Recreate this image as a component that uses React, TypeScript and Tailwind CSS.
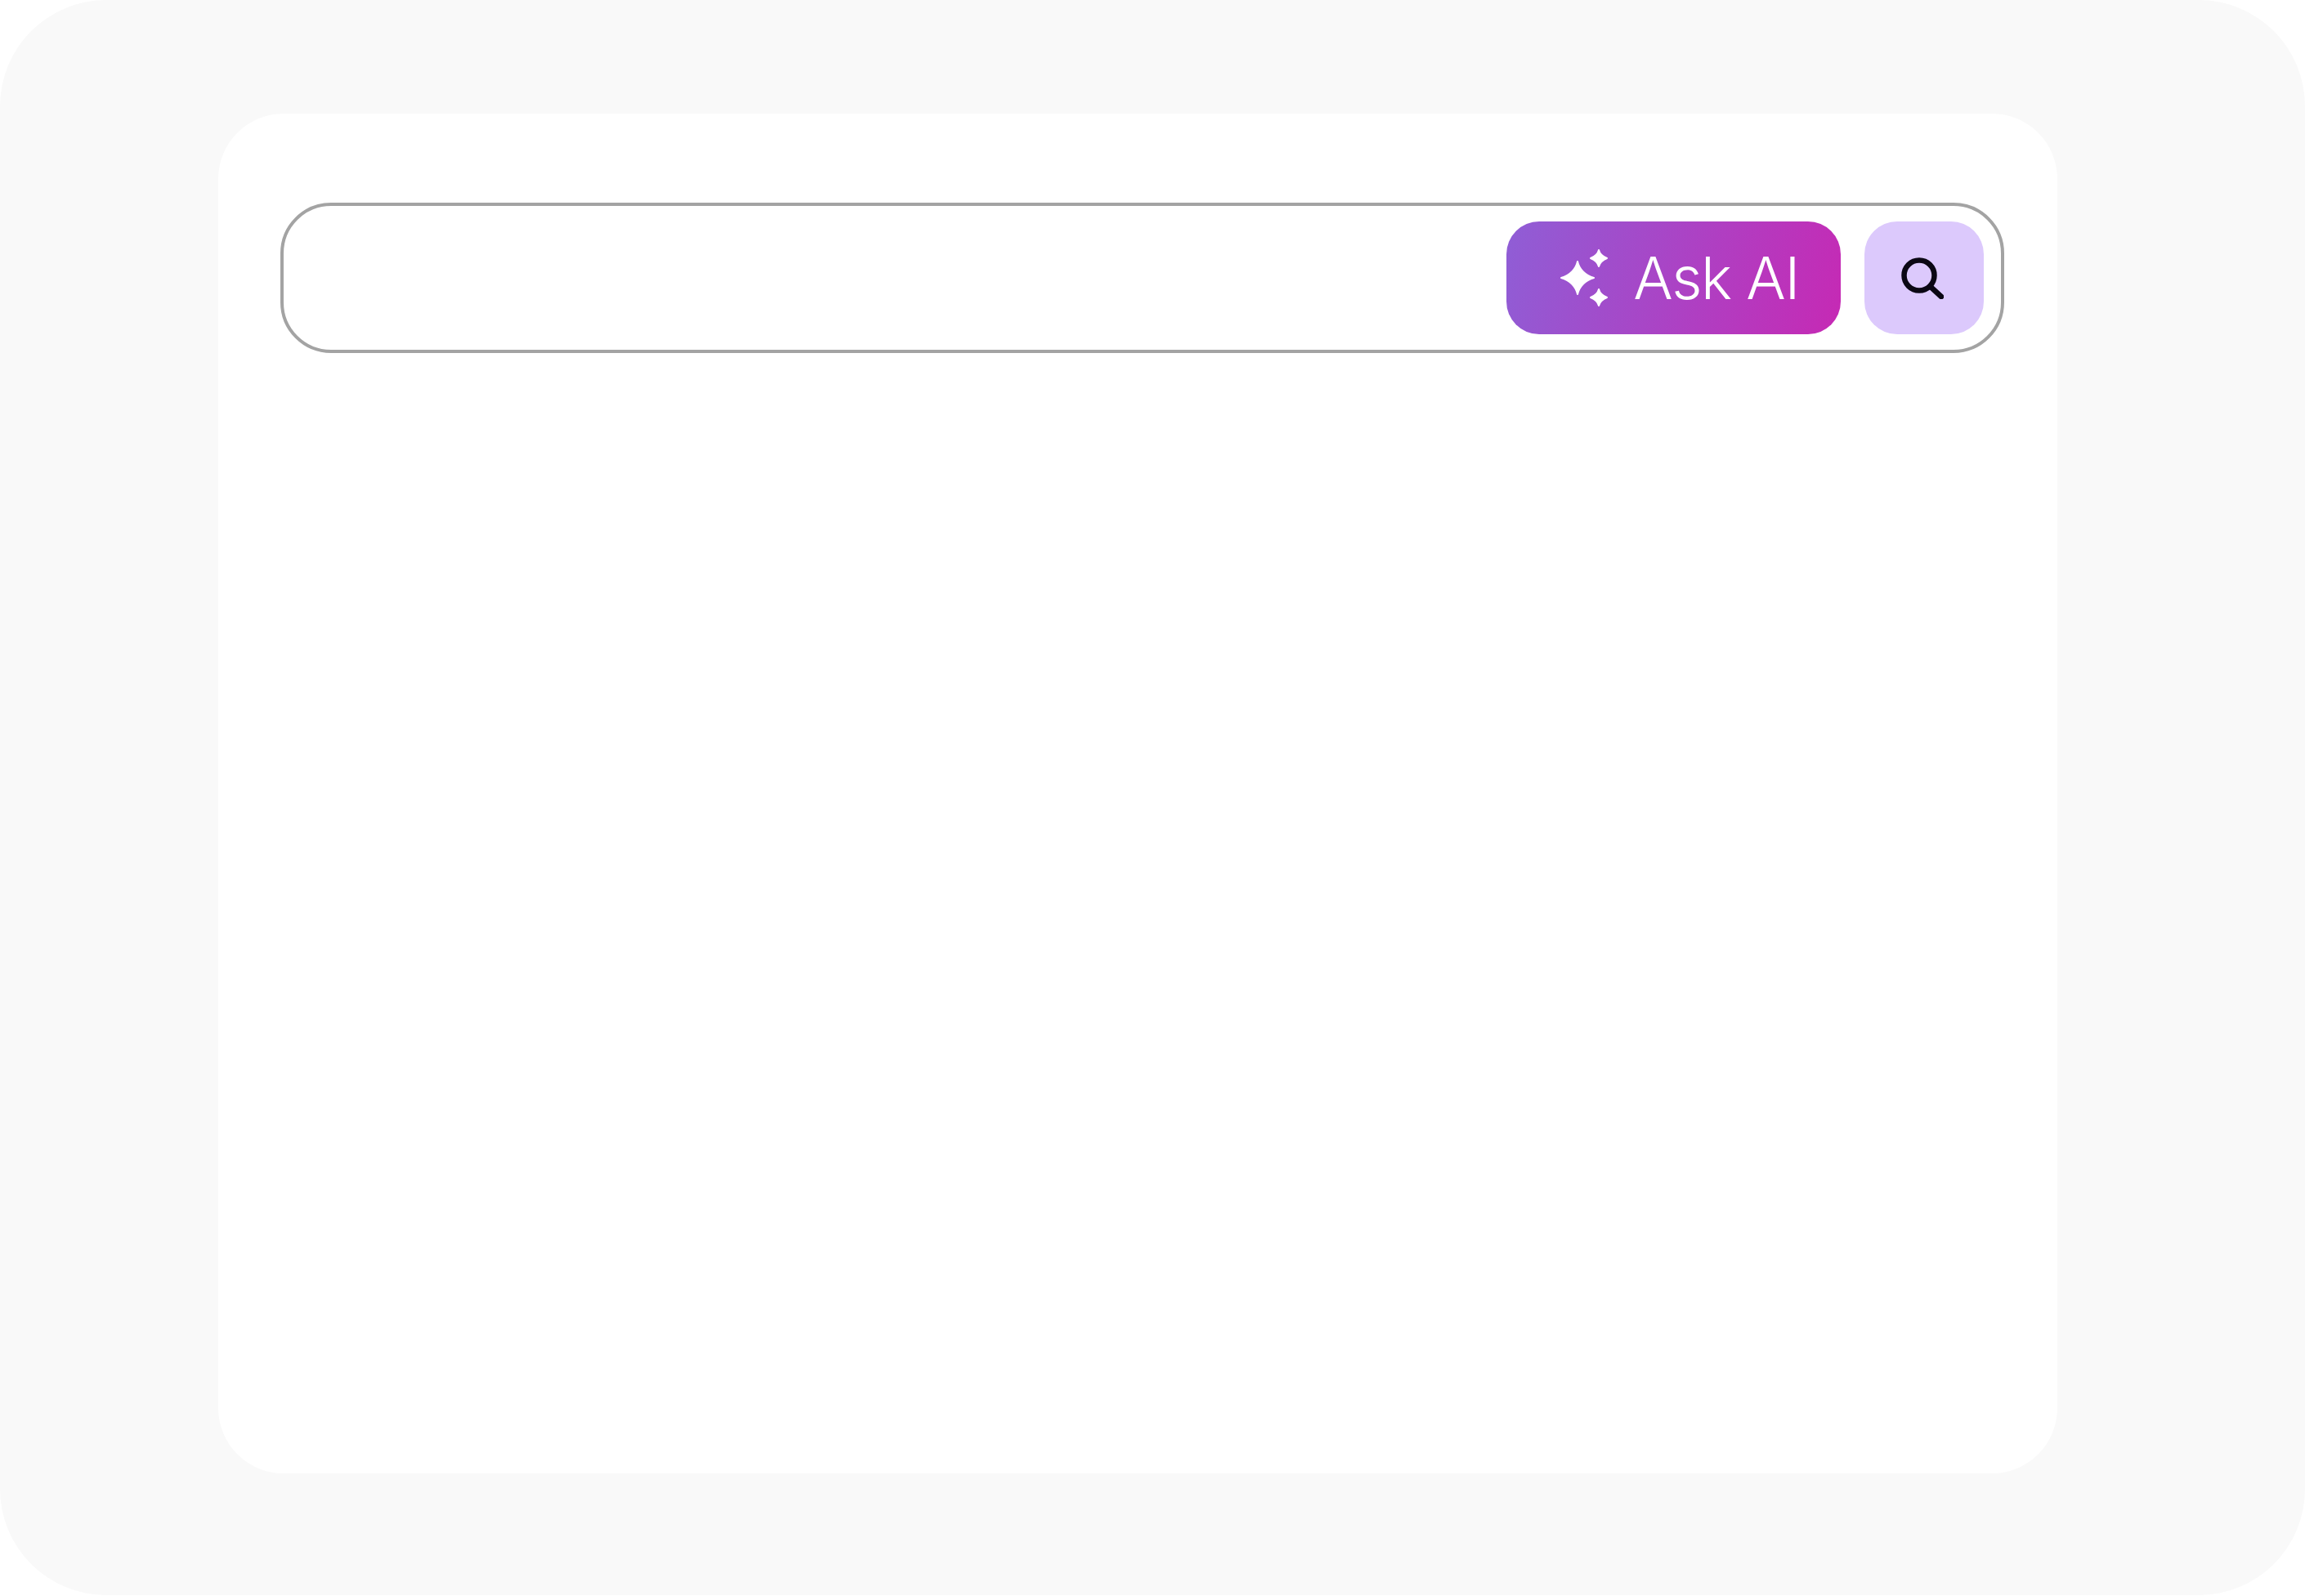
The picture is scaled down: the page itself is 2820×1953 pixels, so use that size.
import React from 'react';

const Sparkles: React.FC = () => (
  <svg width="58" height="70" viewBox="0 0 58 70" fill="white" stroke="white" strokeWidth="2" strokeLinejoin="round" className="shrink-0">
    <path d="M21 15 C23 24 30 32 41 35 C30 38 23 46 21 55 C19 46 12 38 1 35 C12 32 19 24 21 15 Z" />
    <path d="M47 1 C48 5 52 9 57 11 C52 13 48 17 47 21 C46 17 42 13 37 11 C42 9 46 5 47 1 Z" />
    <path d="M47 49 C48 53 52 57 57 59 C52 61 48 65 47 69 C46 65 42 61 37 59 C42 57 46 53 47 49 Z" />
  </svg>
);

const SearchIcon: React.FC = () => (
  <svg width="52" height="52" viewBox="0 0 52 52" fill="none" stroke="#0b0714" strokeWidth="6.5" strokeLinecap="round" className="shrink-0">
    <circle cx="22" cy="23" r="18.5" />
    <path d="M36 37 L49 49" />
  </svg>
);

export default function App() {
  return (
    <div className="w-[2820px] h-[1953px] bg-white font-['Inter',sans-serif]">
      <div className="h-[1952px] rounded-[130px] bg-[#f9f9f9] pl-[267px] pr-[303px] pt-[139px] pb-[149px]">
        <div className="h-full rounded-[80px] bg-white pt-[109px] pl-[76px] pr-[65px]">
          <div className="h-[184px] rounded-[62px] border-[4px] border-[#a3a3a3] bg-white flex items-center justify-end pr-[21px] gap-[29px]">
            <button className="w-[409px] h-[138px] rounded-[40px] bg-[linear-gradient(105deg,#8f5ed6,#c629b4)] flex items-center justify-center gap-[31px] pl-[15px] text-white">
              <Sparkles />
              <span className="text-[72px] leading-none font-light tracking-[-0.02em]">Ask AI</span>
            </button>
            <button className="w-[146px] h-[138px] rounded-[40px] bg-[#dcc9fc] flex items-center justify-center pr-[4px]">
              <SearchIcon />
            </button>
          </div>
        </div>
      </div>
    </div>
  );
}
